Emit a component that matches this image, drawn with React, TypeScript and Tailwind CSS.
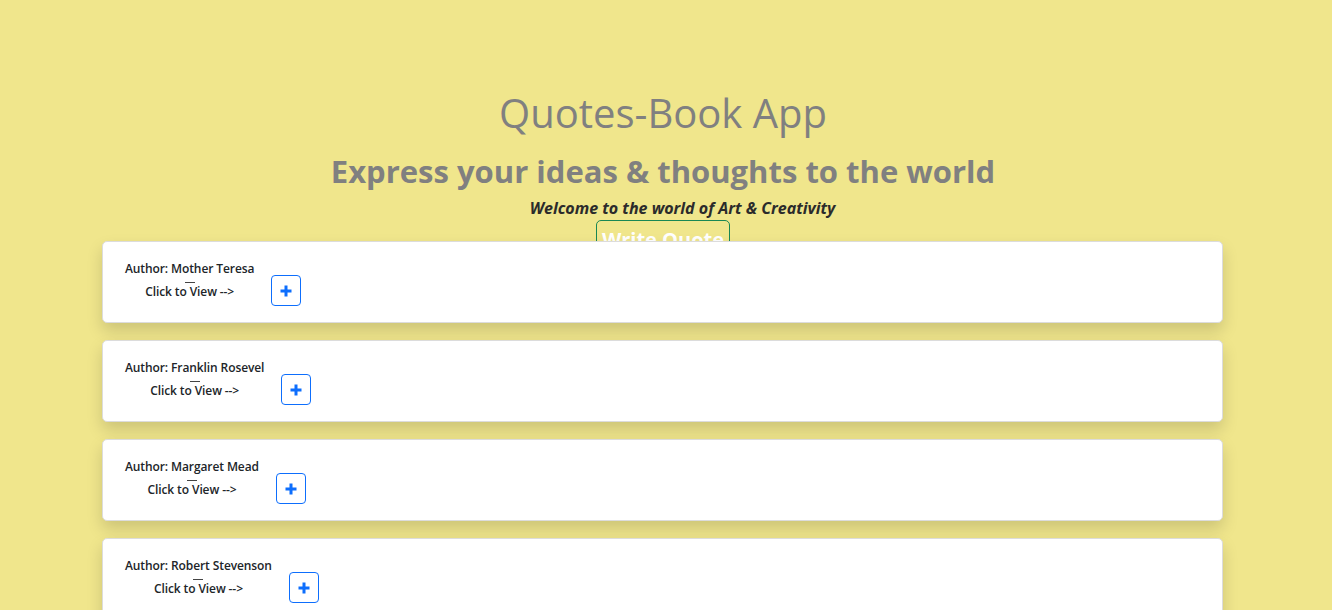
const quotes = [
  { author: "Mother Teresa" },
  { author: "Franklin Rosevel" },
  { author: "Margaret Mead" },
  { author: "Robert Stevenson" },
];

function PlusIcon() {
  return (
    <svg width="12" height="12" viewBox="0 0 12 12" fill="none">
      <path d="M6 0.5v11M0.5 6h11" stroke="#0d6efd" strokeWidth="3" />
    </svg>
  );
}

function QuoteCard({ author }: { author: string }) {
  return (
    <div className="relative h-[82px] rounded-[5px] border border-[#dcdcdc] bg-white px-[22px] pt-[18px] shadow-[0_8px_16px_rgba(0,0,0,0.15)]">
      <div className="flex items-start gap-[17px]">
        <div className="text-center text-[12px] font-semibold leading-[18px] tracking-[-0.1px] text-[#212529]">
          <div>Author: {author}</div>
          <div className="mx-auto mt-[4px] h-px w-[10px] bg-[#444]" />
          <div>Click to View --&gt;</div>
        </div>
        <button className="mt-[15px] flex h-[31px] w-[30px] items-center justify-center rounded-[4px] border border-[#0d6efd] bg-white">
          <PlusIcon />
        </button>
      </div>
    </div>
  );
}

export default function App() {
  return (
    <div className="min-h-screen bg-[#f0e68c] font-['Open_Sans',sans-serif]">
      <header className="h-[241px] pt-[89px] pr-[6px] text-center">
        <h1 className="text-[40px] font-medium leading-[48px] text-[#808080]">
          Quotes-Book App
        </h1>
        <h2 className="mt-[15px] text-[31px] font-bold leading-[38px] text-[#808080]">
          Express your ideas &amp; thoughts to the world
        </h2>
        <p className="mt-[6px] ml-[39px] text-[16px] font-bold italic leading-[24px] text-[#2b2b2b]">
          Welcome to the world of Art &amp; Creativity
        </p>
        <button className="mt-0 h-[40px] rounded-[5px] border border-[#198754] px-[5px] text-[20px] font-bold leading-[38px] text-white">
          Write Quote
        </button>
      </header>
      <main className="mx-[102px] flex w-[1121px] flex-col gap-[17px] pb-[20px]">
        {quotes.map((q) => (
          <QuoteCard key={q.author} author={q.author} />
        ))}
      </main>
    </div>
  );
}
